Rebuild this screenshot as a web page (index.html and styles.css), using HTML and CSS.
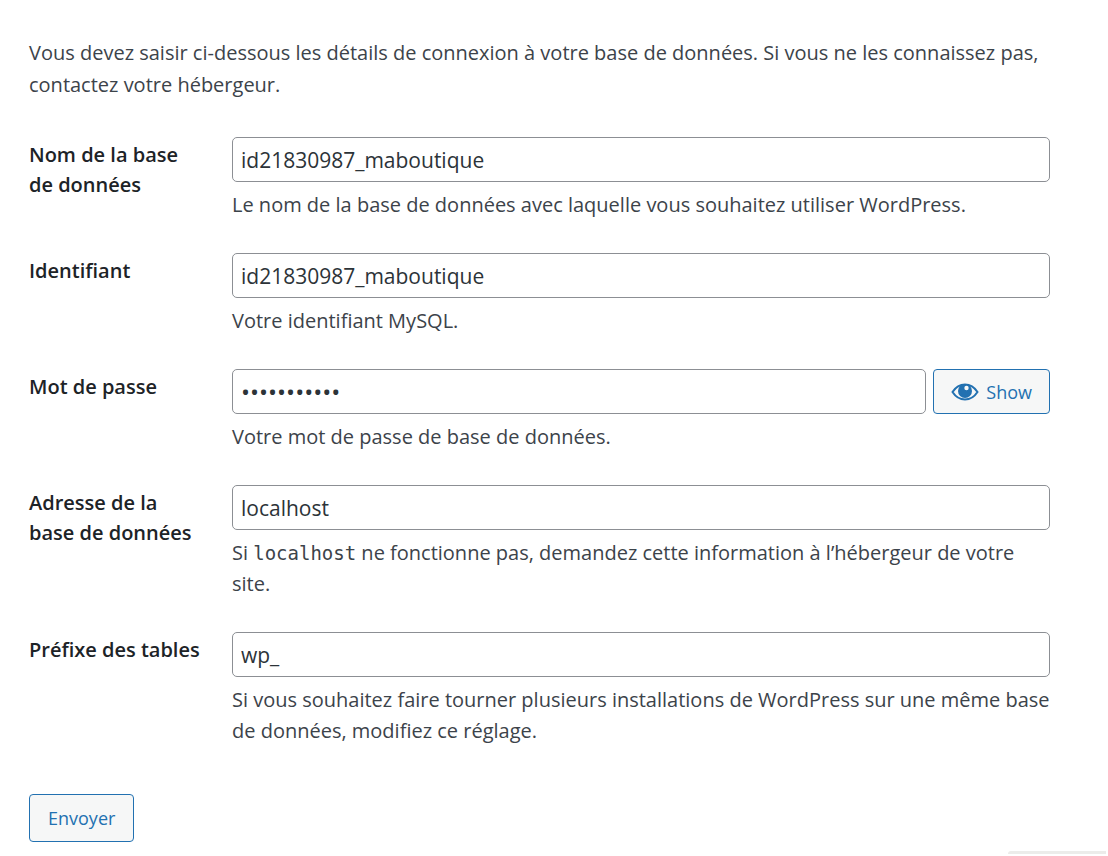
FILE: index.html
```html
<!DOCTYPE html>
<html lang="fr">

<head>
    <meta charset="utf-8">
    <meta name="viewport" content="width=device-width, initial-scale=1.0">
    <title>WordPress</title>
    <link rel="stylesheet" href="styles.css">
</head>

<body>
    <form class="setup">
        <p class="intro">Vous devez saisir ci-dessous les détails de connexion à votre base de données. Si vous ne les connaissez pas, contactez votre hébergeur.</p>

        <div class="row">
            <label for="dbname">Nom de la base de données</label>
            <div class="field">
                <input type="text" id="dbname" value="id21830987_maboutique">
                <p class="help">Le nom de la base de données avec laquelle vous souhaitez utiliser WordPress.</p>
            </div>
        </div>

        <div class="row">
            <label for="uname">Identifiant</label>
            <div class="field">
                <input type="text" id="uname" value="id21830987_maboutique">
                <p class="help">Votre identifiant MySQL.</p>
            </div>
        </div>

        <div class="row">
            <label for="pwd">Mot de passe</label>
            <div class="field">
                <div class="password">
                    <input type="password" id="pwd" value="motdepasse1">
                    <button type="button" class="button show">
                        <svg class="eye" viewBox="0 0 28 20" aria-hidden="true">
                            <path d="M1.500 10C5 4.600 9.200 2.500 14 2.500S23 4.600 26.500 10C23 15.400 18.800 17.500 14 17.500S5 15.400 1.500 10z" fill="none" stroke="currentColor" stroke-width="2" />
                            <circle cx="14" cy="9" r="7" fill="currentColor" />
                            <circle cx="15.500" cy="6" r="2.200" fill="#f6f7f7" />
                        </svg>
                        Show
                    </button>
                </div>
                <p class="help">Votre mot de passe de base de données.</p>
            </div>
        </div>

        <div class="row">
            <label for="dbhost">Adresse de la base de données</label>
            <div class="field">
                <input type="text" id="dbhost" value="localhost">
                <p class="help">Si <code>localhost</code> ne fonctionne pas, demandez cette information à l’hébergeur de votre site.</p>
            </div>
        </div>

        <div class="row">
            <label for="prefix">Préfixe des tables</label>
            <div class="field">
                <input type="text" id="prefix" value="wp_">
                <p class="help">Si vous souhaitez faire tourner plusieurs installations de WordPress sur une même base de données, modifiez ce réglage.</p>
            </div>
        </div>

        <button type="submit" class="button send">Envoyer</button>
    </form>

    <div class="tab"></div>
</body>

</html>
```

FILE: styles.css
```css
* {
    box-sizing: border-box;
}

body {
    margin: 0;
    background-color: #fff;
    color: #3c434a;
    font-family: "Segoe UI", "Open Sans", sans-serif;
    font-size: 20px;
}

p {
    margin: 0;
}

.setup {
    padding: 37px 58px 0 29px;
}

.intro {
    line-height: 32px;
    margin-bottom: 36px;
}

.row {
    display: grid;
    grid-template-columns: 174px 1fr;
    column-gap: 29px;
    margin-bottom: 33px;
}

label {
    padding-top: 3px;
    line-height: 30px;
    font-weight: 600;
    color: #1d2327;
}

.field {
    min-width: 0;
}

input {
    width: 100%;
    height: 45px;
    padding: 0 8px;
    border: 1px solid #8c8f94;
    border-radius: 5px;
    background-color: #fff;
    color: #2c3338;
    font-family: inherit;
    font-size: 21px;
}

input[type="password"] {
    font-size: 24px;
}

.help {
    margin-top: 7px;
    line-height: 31px;
}

code {
    font-family: Consolas, "DejaVu Sans Mono", monospace;
    font-size: 19px;
    line-height: 1;
}

.password {
    display: flex;
    gap: 7px;
}

.password input {
    flex: 1;
    min-width: 0;
}

.button {
    border: 1px solid #2271b1;
    border-radius: 4px;
    background-color: #f6f7f7;
    color: #2271b1;
    font-family: inherit;
    font-size: 18px;
    cursor: pointer;
}

.show {
    display: flex;
    align-items: center;
    gap: 7px;
    padding: 0 17px;
}

.eye {
    width: 28px;
    height: 20px;
}

.send {
    height: 48px;
    margin-top: 15px;
    padding: 0 18px;
}

.tab {
    width: 98px;
    height: 3px;
    margin: 9px 2px 0 auto;
    border-radius: 3px 0 0 0;
    background-color: #ececea;
}
```
